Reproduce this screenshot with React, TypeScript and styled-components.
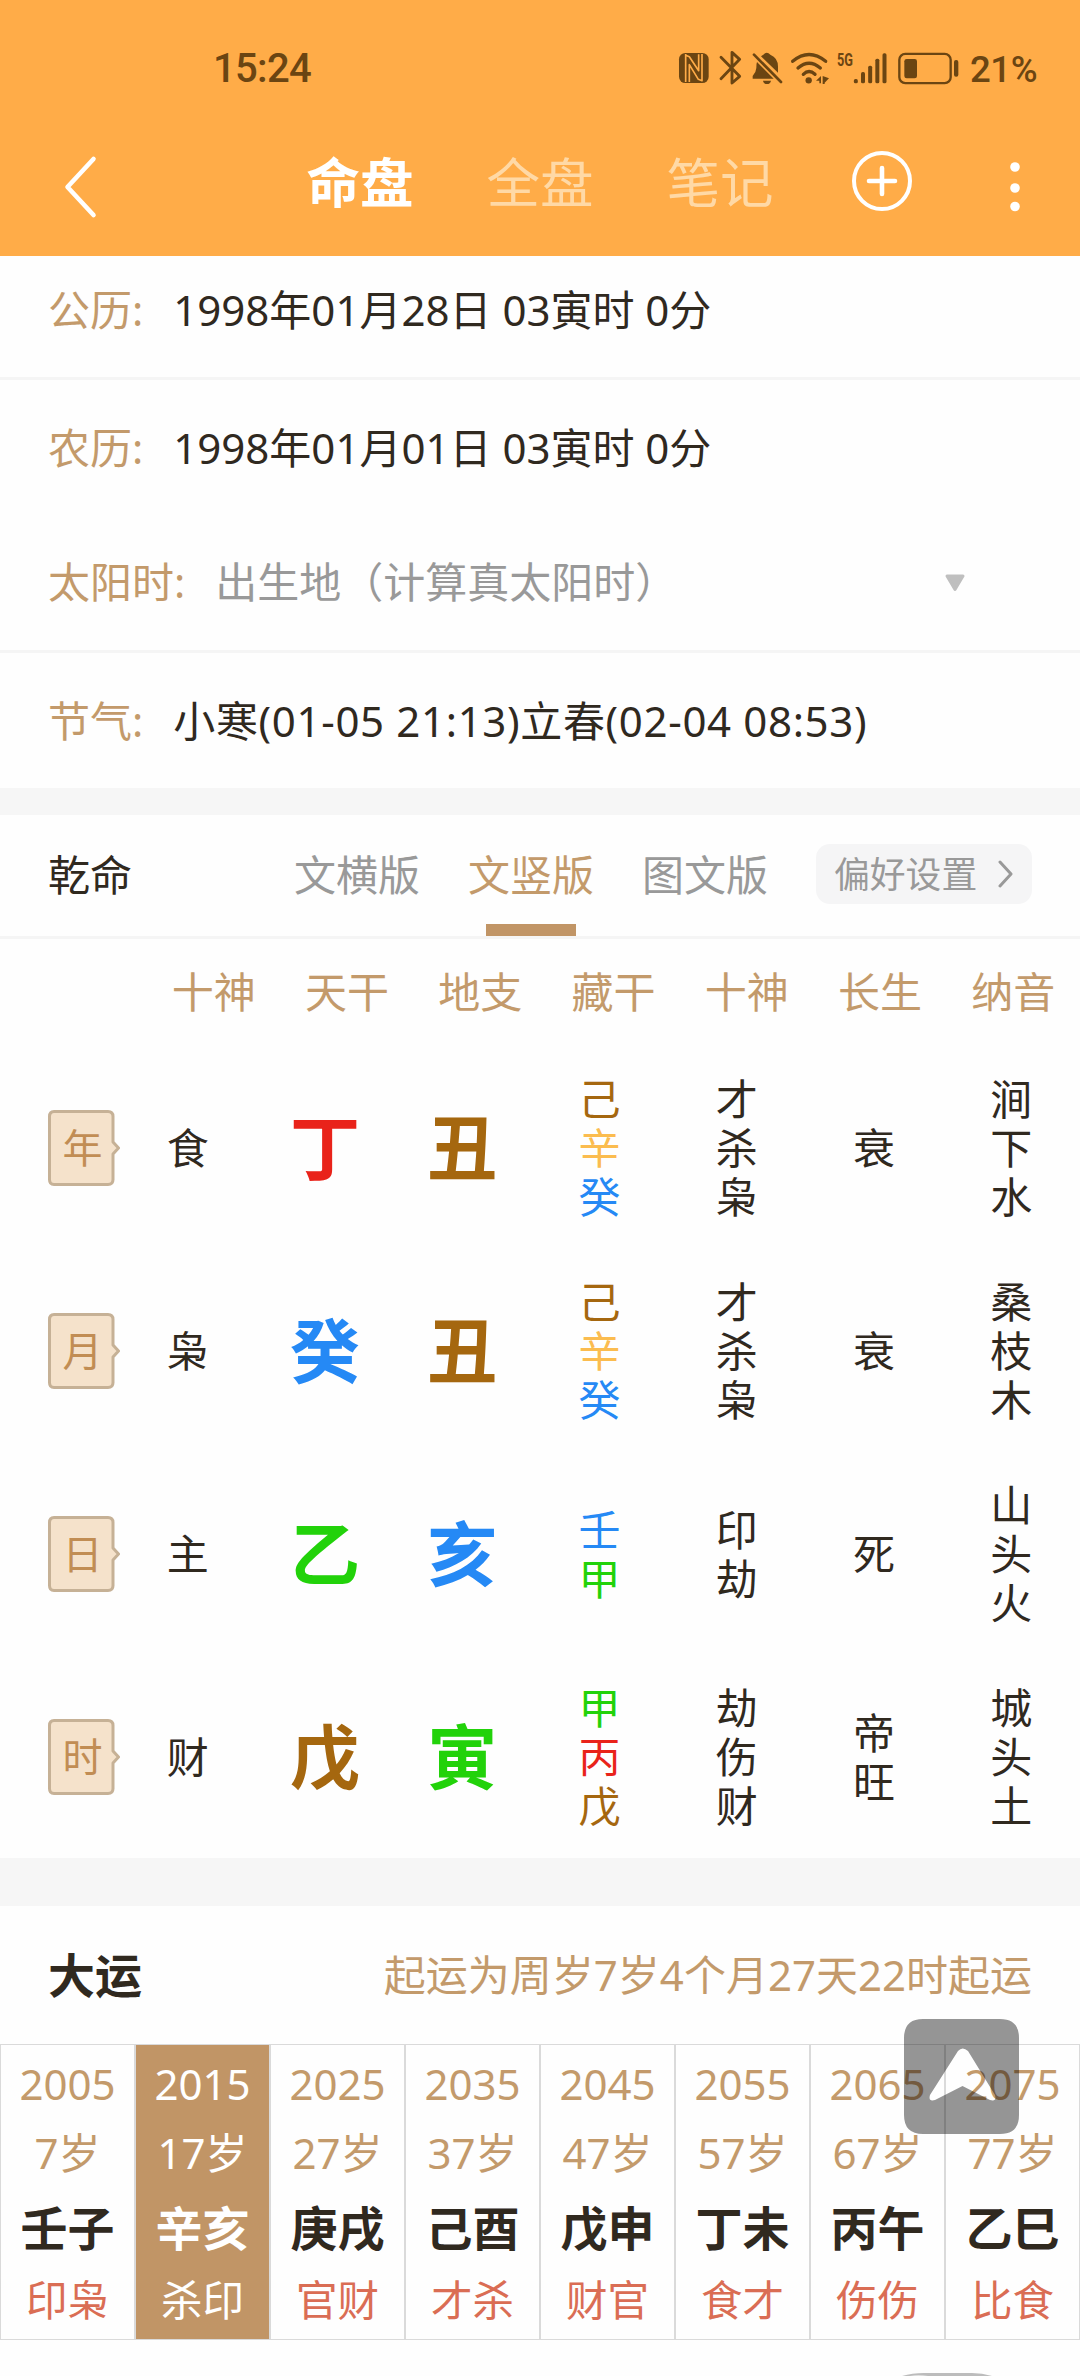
import React from "react";
import styled, { createGlobalStyle } from "styled-components";

const C = {
  orange: "#ffac48",
  status: "#6b4512",
  tan: "#c39a6b",
  tanFill: "#c19566",
  ink: "#30291f",
  gray: "#999999",
  band: "#f6f6f6",
  line: "#f5f5f5",
  red: "#e9231a",
  brown: "#a5670f",
  blue: "#2589f5",
  green: "#22d20a",
  gold: "#fbbc4f",
  coral: "#da6d54",
};

const GlobalStyle = createGlobalStyle`
  * { box-sizing: border-box; }
  body {
    margin: 0;
    background: #fefefe;
    font-family: "Noto Sans", "Noto Sans CJK SC", sans-serif;
    color: ${C.ink};
  }
`;

const Screen = styled.div`
  position: relative;
  width: 1080px;
  height: 2376px;
  overflow: hidden;
  background: #fefefe;
  display: flex;
  flex-direction: column;
  font-size: 42px;
  line-height: 60px;
  white-space: nowrap;
`;

const Header = styled.header`
  height: 256px;
  flex: none;
  background: ${C.orange};
`;

const StatusBar = styled.div`
  display: flex;
  justify-content: space-between;
  align-items: center;
  height: 136px;
  padding: 0 41px 0 213px;
  color: ${C.status};
`;

const Clock = styled.span`
  font-family: Roboto, "Noto Sans", sans-serif;
  font-size: 40px;
  font-weight: 500;
  letter-spacing: -0.7px;
  padding-top: 1px;
`;

const StatusIcons = styled.div`
  display: flex;
  align-items: center;
  gap: 9px;
  svg { overflow: visible; display: block; }
`;

const Percent = styled.span`
  font-family: Roboto, "Noto Sans", sans-serif;
  font-size: 36.5px;
  font-weight: 500;
  letter-spacing: -0.4px;
  margin-left: 2px;
  padding-top: 3px;
  width: 69px;
`;

const NavBar = styled.nav`
  display: grid;
  grid-template-columns: 270px 180px 180px 180px 144px 122px;
  align-items: center;
  justify-items: center;
  height: 94px;
`;

const BackIcon = styled.svg`
  justify-self: start;
  margin: 8px 0 0 60px;
`;

const NavTab = styled.span<{ $active?: boolean }>`
  font-size: 53.5px;
  line-height: 80px;
  font-weight: ${(p) => (p.$active ? 700 : 400)};
  color: ${(p) => (p.$active ? "#fff" : "#ffd9a6")};
`;

const AddIcon = styled.svg`
  margin-bottom: 4px;
`;

const MoreIcon = styled.svg`
  margin-top: 8px;
`;

const InfoRow = styled.div<{ $h: number; $shift?: number; $border?: boolean }>`
  flex: none;
  height: ${(p) => p.$h}px;
  padding: ${(p) => p.$shift ?? 0}px 48px 0;
  display: flex;
  align-items: flex-start;
  gap: 30px;
  border-bottom: ${(p) => (p.$border ? `3px solid ${C.line}` : "none")};
`;

const Label = styled.span`
  color: ${C.tan};
`;

const Value = styled.span<{ $muted?: boolean; $track?: number }>`
  color: ${(p) => (p.$muted ? C.gray : C.ink)};
  letter-spacing: ${(p) => p.$track ?? 0}px;
`;

const Caret = styled.svg`
  margin: 21px 66px 0 auto;
`;

const Band = styled.div<{ $h: number }>`
  flex: none;
  height: ${(p) => p.$h}px;
  background: ${C.band};
`;

const ModeBar = styled.div`
  flex: none;
  height: 124px;
  display: flex;
  align-items: stretch;
  padding: 0 48px;
  border-bottom: 3px solid ${C.line};
`;

const ModeTitle = styled.div`
  width: 222px;
  padding-top: 30px;
`;

const ModeTab = styled.div<{ $active?: boolean }>`
  width: 174px;
  display: flex;
  flex-direction: column;
  align-items: center;
  justify-content: space-between;
  padding-top: 30px;
  color: ${(p) => (p.$active ? C.tan : C.gray)};
  &::after {
    content: "";
    width: 90px;
    height: 12px;
    background: ${(p) => (p.$active ? C.tanFill : "transparent")};
  }
`;

const Pref = styled.button`
  margin: 29px 0 0 auto;
  width: 216px;
  height: 60px;
  border: 0;
  border-radius: 14px;
  background: #f5f5f6;
  display: flex;
  align-items: center;
  justify-content: space-between;
  padding: 0 18px;
  font: inherit;
  font-size: 35.8px;
  line-height: 58px;
  color: ${C.gray};
`;

const PillarHead = styled.div`
  flex: none;
  height: 107px;
  padding: 23px 0 0 147px;
  display: grid;
  grid-template-columns: repeat(7, 1fr);
  text-align: center;
  color: ${C.tan};
`;

const PillarRow = styled.div`
  flex: none;
  height: 203px;
  display: grid;
  grid-template-columns: 119px repeat(7, 1fr);
  align-items: center;
  justify-items: center;
`;

const Tag = styled.div`
  position: relative;
  justify-self: start;
  margin-left: 48px;
  width: 72px;
  height: 76px;
  padding-right: 3px;
  text-align: center;
  font-size: 40px;
  line-height: 76px;
  color: #c18d54;
  svg { position: absolute; left: 0; top: 0; }
  span { position: relative; }
`;

const Stem = styled.span<{ $color: string }>`
  font-size: 70px;
  line-height: 90px;
  font-weight: 700;
  color: ${(p) => p.$color};
`;

const Stack = styled.div`
  display: flex;
  flex-direction: column;
  line-height: 49px;
`;

const Glyph = styled.span<{ $color?: string }>`
  color: ${(p) => p.$color ?? C.ink};
`;

const LuckHead = styled.div`
  flex: none;
  height: 138px;
  padding: 0 48px;
  display: flex;
  justify-content: space-between;
  align-items: center;
  color: ${C.tan};
`;

const LuckTitle = styled.h2`
  margin: 0;
  font-size: 47px;
  font-weight: 700;
  color: ${C.ink};
`;

const LuckGrid = styled.div`
  flex: none;
  display: grid;
  grid-template-columns: repeat(8, 135px);
  height: 296px;
`;

const LuckCell = styled.div<{ $active?: boolean }>`
  border: 1px solid #dadada;
  background: ${(p) => (p.$active ? C.tanFill : "transparent")};
  color: ${(p) => (p.$active ? "#fff" : C.tan)};
  display: flex;
  flex-direction: column;
  align-items: center;
  padding-top: 8px;
`;

const LuckLine = styled.span<{ $h: number }>`
  line-height: ${(p) => p.$h}px;
`;

const LuckPair = styled.span<{ $active?: boolean }>`
  font-size: 47px;
  font-weight: 700;
  line-height: 74px;
  color: ${(p) => (p.$active ? "#fff" : C.ink)};
`;

const LuckGods = styled.span<{ $active?: boolean }>`
  line-height: 70px;
  font-size: 41.5px;
  color: ${(p) => (p.$active ? "#fff" : C.coral)};
`;

const TopButton = styled.svg`
  position: absolute;
  left: 904px;
  top: 2019px;
`;

const NextButton = styled.svg`
  position: absolute;
  left: 902px;
  top: 2372px;
`;

/* Status glyphs share one vertical range (30..138) so they line up in the row. */
const StatusGlyph = ({ x, w, children }: { x: number; w: number; children: React.ReactNode }) => (
  <svg width={w / 3} height={36} viewBox={`${x} 30 ${w} 108`} fill="none" strokeLinecap="round" strokeLinejoin="round">
    {children}
  </svg>
);

const bars = [117, 96, 77, 56, 40];

function Status() {
  const s = C.status;
  return (
    <StatusBar>
      <Clock>15:24</Clock>
      <StatusIcons>
        <StatusGlyph x={29} w={90}>
          <rect x="29" y="39" width="89" height="90" rx="19" fill={s} />
          <path d="M49 42V126 M49 46L60 50L88 92V43 M60 126V74L87 118L98 122V42" stroke={C.orange} strokeWidth="5" strokeLinecap="butt" />
        </StatusGlyph>
        <StatusGlyph x={146} w={76}>
          <path d="M155 52L211 109L188 129V37L211 58L155 116" stroke={s} strokeWidth="8.5" />
        </StatusGlyph>
        <StatusGlyph x={249} w={90}>
          <path d="M283 44Q293 33 304 44Q327 53 327 80V98L276 49Q279 46 283 44Z" fill={s} />
          <path d="M264 66Q262 70 262 84Q261 98 251 108V116H314Z" fill={s} />
          <path d="M282 122H306Q304 132 294 132Q284 132 282 122Z" fill={s} />
          <path d="M255 44L336 126" stroke={s} strokeWidth="8" />
        </StatusGlyph>
        <StatusGlyph x={366} w={114}>
          <path d="M371 64Q420 23 470 64M387 84Q420 55 454 84M403 103Q420 86 438 103" stroke={s} strokeWidth="10" />
          <circle cx="419" cy="121" r="9.5" fill={s} />
          <path d="M456 108V130H451V122H441Z M461 108V132H467V128L480 115Z" fill={s} />
        </StatusGlyph>
        <StatusGlyph x={507} w={147}>
          <text x="504" y="79" fontFamily="Roboto, sans-serif" fontWeight="700" fontSize="54" textLength="48" lengthAdjust="spacingAndGlyphs" fill={s}>
            5G
          </text>
          {bars.map((top, i) => (
            <rect key={top} x={554.5 + i * 21.5} y={top} width="12" height={130 - top} rx="5" fill={s} />
          ))}
        </StatusGlyph>
        <StatusGlyph x={681} w={189}>
          <rect x="691" y="41.5" width="154" height="88" rx="18" stroke={s} strokeWidth="7" />
          <rect x="706" y="57" width="38" height="58" rx="7" fill={s} />
          <rect x="855" y="60" width="13" height="50" rx="6" fill={s} />
        </StatusGlyph>
        <Percent>21%</Percent>
      </StatusIcons>
    </StatusBar>
  );
}

type Row = {
  tag: string;
  god: string;
  stem: [string, string];
  branch: [string, string];
  hidden: [string, string][];
  gods: string;
  life: string;
  sound: string;
};

const rows: Row[] = [
  { tag: "年", god: "食", stem: ["丁", C.red], branch: ["丑", C.brown], hidden: [["己", C.brown], ["辛", C.gold], ["癸", C.blue]], gods: "才杀枭", life: "衰", sound: "涧下水" },
  { tag: "月", god: "枭", stem: ["癸", C.blue], branch: ["丑", C.brown], hidden: [["己", C.brown], ["辛", C.gold], ["癸", C.blue]], gods: "才杀枭", life: "衰", sound: "桑枝木" },
  { tag: "日", god: "主", stem: ["乙", C.green], branch: ["亥", C.blue], hidden: [["壬", C.blue], ["甲", C.green]], gods: "印劫", life: "死", sound: "山头火" },
  { tag: "时", god: "财", stem: ["戊", C.brown], branch: ["寅", C.green], hidden: [["甲", C.green], ["丙", C.red], ["戊", C.brown]], gods: "劫伤财", life: "帝旺", sound: "城头土" },
];

const heads = ["十神", "天干", "地支", "藏干", "十神", "长生", "纳音"];

const luck = [
  ["2005", "7岁", "壬子", "印枭"],
  ["2015", "17岁", "辛亥", "杀印"],
  ["2025", "27岁", "庚戌", "官财"],
  ["2035", "37岁", "己酉", "才杀"],
  ["2045", "47岁", "戊申", "财官"],
  ["2055", "57岁", "丁未", "食才"],
  ["2065", "67岁", "丙午", "伤伤"],
  ["2075", "77岁", "乙巳", "比食"],
];

const Column = ({ text }: { text: string }) => (
  <Stack>
    {[...text].map((ch, i) => (
      <Glyph key={i}>{ch}</Glyph>
    ))}
  </Stack>
);

export default function App() {
  return (
    <>
      <GlobalStyle />
      <Screen>
        <Header>
          <Status />
          <NavBar>
            <BackIcon width="40" height="64" viewBox="0 0 40 64" fill="none" stroke="#fff" strokeWidth="4.6" strokeLinecap="round" strokeLinejoin="round">
              <path d="M33.5 4L7.5 32L33.5 60" />
            </BackIcon>
            <NavTab $active>命盘</NavTab>
            <NavTab>全盘</NavTab>
            <NavTab>笔记</NavTab>
            <AddIcon width="62" height="62" viewBox="0 0 62 62" fill="none" stroke="#fff" strokeLinecap="round">
              <circle cx="31" cy="31" r="28" strokeWidth="4" />
              <path d="M31 18V44M18 31H44" strokeWidth="4.6" />
            </AddIcon>
            <MoreIcon width="12" height="52" viewBox="0 0 12 52" fill="#fff">
              <circle cx="6" cy="6" r="4.8" />
              <circle cx="6" cy="27" r="4.8" />
              <circle cx="6" cy="45.5" r="4.8" />
            </MoreIcon>
          </NavBar>
        </Header>

        <InfoRow $h={124} $shift={24} $border>
          <Label>公历:</Label>
          <Value>1998年01月28日 03寅时 0分</Value>
        </InfoRow>
        <InfoRow $h={136} $shift={38}>
          <Label>农历:</Label>
          <Value>1998年01月01日 03寅时 0分</Value>
        </InfoRow>
        <InfoRow $h={137} $shift={36} $border>
          <Label>太阳时:</Label>
          <Value $muted>出生地（计算真太阳时）</Value>
          <Caret width="22" height="20" viewBox="0 0 22 20">
            <path d="M3 3H19L11 16.5Z" fill="#bfbfbf" stroke="#bfbfbf" strokeWidth="3" strokeLinejoin="round" />
          </Caret>
        </InfoRow>
        <InfoRow $h={135} $shift={38}>
          <Label>节气:</Label>
          <Value $track={0.66}>小寒(01-05 21:13)立春(02-04 08:53)</Value>
        </InfoRow>

        <Band $h={27} />

        <ModeBar>
          <ModeTitle>乾命</ModeTitle>
          <ModeTab>文横版</ModeTab>
          <ModeTab $active>文竖版</ModeTab>
          <ModeTab>图文版</ModeTab>
          <Pref>
            偏好设置
            <svg width="16" height="30" viewBox="0 0 16 30" fill="none" stroke="#999" strokeWidth="3" strokeLinecap="round" strokeLinejoin="round">
              <path d="M2 3L13 15L2 27" />
            </svg>
          </Pref>
        </ModeBar>

        <PillarHead>
          {heads.map((h, i) => (
            <span key={i}>{h}</span>
          ))}
        </PillarHead>

        {rows.map((r) => (
          <PillarRow key={r.tag}>
            <Tag>
              <svg width="72" height="76" viewBox="0 0 72 76" fill="#f5e2cb" stroke="#c6b196" strokeWidth="3" strokeLinejoin="round">
                <path d="M6 1.5H60Q65 1.5 65 6.5V32L70.5 38L65 44V69.500Q65 74.500 60 74.500H6Q1.500 74.500 1.500 69.500V6.500Q1.500 1.500 6 1.500Z" />
              </svg>
              <span>{r.tag}</span>
            </Tag>
            <Glyph>{r.god}</Glyph>
            <Stem $color={r.stem[1]}>{r.stem[0]}</Stem>
            <Stem $color={r.branch[1]}>{r.branch[0]}</Stem>
            <Stack>
              {r.hidden.map(([ch, color]) => (
                <Glyph key={ch} $color={color}>{ch}</Glyph>
              ))}
            </Stack>
            <Column text={r.gods} />
            <Column text={r.life} />
            <Column text={r.sound} />
          </PillarRow>
        ))}

        <Band $h={48} />

        <LuckHead>
          <LuckTitle>大运</LuckTitle>
          <span>起运为周岁7岁4个月27天22时起运</span>
        </LuckHead>

        <LuckGrid>
          {luck.map(([year, age, pair, gods], i) => (
            <LuckCell key={year} $active={i === 1}>
              <LuckLine $h={62}>{year}</LuckLine>
              <LuckLine $h={76}>{age}</LuckLine>
              <LuckPair $active={i === 1}>{pair}</LuckPair>
              <LuckGods $active={i === 1}>{gods}</LuckGods>
            </LuckCell>
          ))}
        </LuckGrid>

        <TopButton width="115" height="115" viewBox="0 0 115 115">
          <path
            fillRule="evenodd"
            fill="rgba(0,0,0,0.41)"
            d="M19 0H96Q115 0 115 19V96Q115 115 96 115H19Q0 115 0 96V19Q0 0 19 0Z
               M54 32L26 76Q24 83 31 81L58.500 67L86 81Q93 83 91 76L64 32Q58.500 27 54 32Z"
          />
        </TopButton>
        <NextButton width="92" height="4" viewBox="0 0 92 4">
          <path d="M0 4Q10 1 22 1H70Q80 1 90 4Z" fill="#bcbcbc" />
          <path d="M8 4Q16 2 26 4Z" fill="#e2e2e2" />
        </NextButton>
      </Screen>
    </>
  );
}
